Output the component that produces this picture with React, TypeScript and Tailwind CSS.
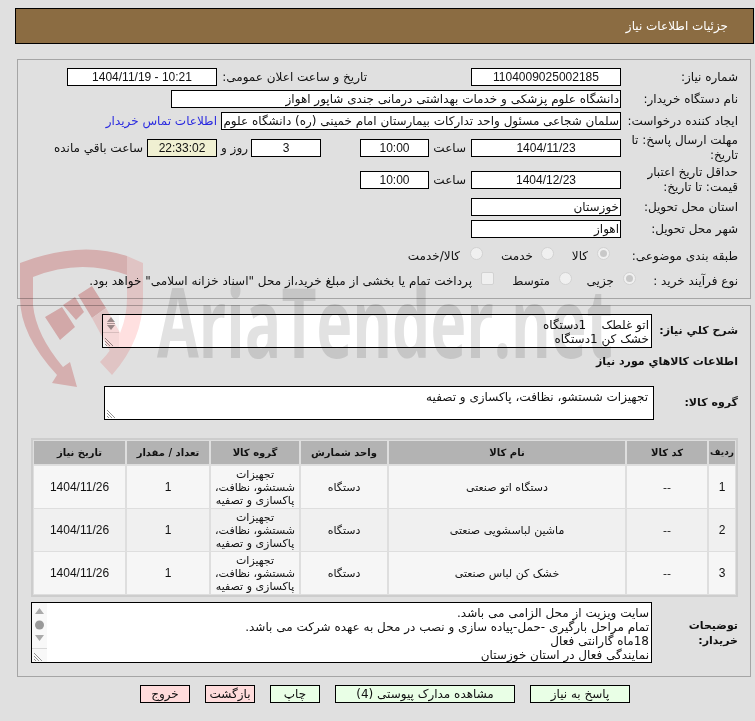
const FONT = "font-['DejaVu_Sans',sans-serif]";
const NUM = "font-['Liberation_Sans',sans-serif]";

function Box({ w, children, center, bg }: { w: string; children?: React.ReactNode; center?: boolean; bg?: string }) {
  return (
    <div className={`${w} h-[18px] shrink-0 overflow-hidden whitespace-nowrap border border-black px-px text-[12px] leading-[16px] ${bg ?? 'bg-white'} ${center ? `text-center ${NUM}` : 'text-right'}`}>
      {children}
    </div>
  );
}

function Row({ label, children, h, mt }: { label: React.ReactNode; children: React.ReactNode; h: string; mt: string }) {
  return (
    <div className={`flex items-center ${h} ${mt}`}>
      <div className="w-[128px] shrink-0 pr-[11px] text-[12px] leading-[15px]">{label}</div>
      {children}
    </div>
  );
}

function Radio({ on }: { on?: boolean }) {
  return (
    <span className="mb-[5px] flex h-[13px] w-[13px] shrink-0 items-center justify-center rounded-full border border-[#d2d2d2] bg-[#f0f0f0]">
      {on && <span className="h-[7px] w-[7px] rounded-full bg-[#c8c8c8]" />}
    </span>
  );
}

const cols = ['w-[26px]', 'w-[80px]', 'w-[236px]', 'w-[86px]', 'w-[88px]', 'w-[82px]', 'w-[91px]'];
const heads = ['ردیف', 'کد کالا', 'نام کالا', 'واحد شمارش', 'گروه کالا', 'تعداد / مقدار', 'تاریخ نیاز'];
const items = ['دستگاه اتو صنعتی', 'ماشین لباسشویی صنعتی', 'خشک کن لباس صنعتی'];

function Table() {
  return (
    <div className="mr-[11px] mt-[18px] flex w-[707px] flex-col gap-[1px] border-2 border-[#cdcdcd] bg-[#dedede] p-[1px]">
      <div className="mb-[1px] flex gap-[2px]">
        {heads.map((t, i) => (
          <div key={t} className={`${cols[i]} ${i === 0 ? 'text-[9px]' : 'text-[10px]'} flex h-[23px] items-center justify-center whitespace-nowrap bg-[#b3b3b3] font-bold`}>{t}</div>
        ))}
      </div>
      {items.map((name, r) => {
        const cells = [String(r + 1), '--', name, 'دستگاه', '', '1', '1404/11/26'];
        const bg = r === 1 ? 'bg-[#f0f0f0]' : 'bg-[#f6f6f6]';
        return (
          <div key={name} className="flex gap-[2px]">
            {cells.map((c, i) => (
              <div key={i} className={`${cols[i]} ${bg} ${i === 6 || i === 5 || i === 0 ? `${NUM} text-[12px]` : 'text-[11px]'} flex h-[42px] items-center justify-center overflow-hidden text-center leading-[13px]`}>
                {i === 4 ? (
                  <div className="whitespace-nowrap text-[11px] font-['DejaVu_Sans',sans-serif]">
                    <div>تجهیزات</div>
                    <div>شستشو، نظافت،</div>
                    <div>پاکسازی و تصفیه</div>
                  </div>
                ) : c}
              </div>
            ))}
          </div>
        );
      })}
    </div>
  );
}

function Corner() {
  return (
    <svg width="12" height="10" viewBox="0 0 12 10" className="absolute bottom-0 left-0">
      <path d="M2 1l8 8M2 4l5 5M2 7l2 2" stroke="#777" strokeWidth="0.8" />
    </svg>
  );
}

function Btn({ w, bg, children }: { w: string; bg: string; children: React.ReactNode }) {
  return <div className={`${w} ${bg} flex h-[18px] items-center justify-center border border-black text-[12px]`}>{children}</div>;
}

function Watermark() {
  return (
    <div className="pointer-events-none absolute inset-0 z-10 mix-blend-multiply" dir="ltr">
      <svg width="755" height="721" viewBox="0 0 755 721" className="absolute left-0 top-0">
        <path d="M20 263 Q80 240 127 256 L127 275 Q80 258 33 277 L33 305 Q36 335 63 367 L70 362 L77 387 L52 383 L57 375 Q20 335 20 298 Z" fill="#f3c8c8" />
        <path d="M127 256 L143 263 L143 298 Q143 340 112 375 L100 362 Q127 335 127 298 Z" fill="#ffe0e0" />
        <path d="M45 317 L62 307 L75 327 L60 340 Z M63 305 L75 297 L84 312 L76 320 Z M78 295 L92 286 L106 308 L92 318 Z" fill="#efc0c0" />
        <path d="M92 318 L106 308 L127 345 L112 355 Z" fill="#ffe0e0" />
      </svg>
      <div className="absolute left-[157px] top-[271px] origin-left scale-x-[0.631] whitespace-nowrap font-['Open_Sans',sans-serif] text-[96px] font-bold leading-[100px] text-[#e2e2e2]">
        AriaTender.net
      </div>
    </div>
  );
}

export default function App() {
  return (
    <div dir="rtl" className={`${FONT} relative h-[721px] w-[755px] overflow-hidden bg-[#e0e0e0] text-[#111]`}>
      <div className="absolute left-[15px] top-[8px] flex h-[36px] w-[739px] items-center border border-black bg-[#8b6c42] pr-[25px] text-[12px] text-white">
        جزئیات اطلاعات نیاز
      </div>

      <Watermark />

      <div className="absolute left-[17px] top-[59px] h-[240px] w-[734px] border border-[#a5a5a5] pr-px pt-[8px]">
        <Row label="شماره نیاز:" h="h-[18px]" mt="">
          <Box w="w-[150px]" center>1104009025002185</Box>
          <div className="w-[250px] shrink-0 whitespace-nowrap pr-[104px] text-[12px]">تاریخ و ساعت اعلان عمومی:</div>
          <Box w="w-[150px] mr-[4px]" center><span dir="ltr">1404/11/19 - 10:21</span></Box>
        </Row>
        <Row label="نام دستگاه خریدار:" h="h-[18px]" mt="mt-[4px]">
          <Box w="w-[450px]">دانشگاه علوم پزشکی و خدمات بهداشتی درمانی جندی شاپور اهواز</Box>
        </Row>
        <Row label={<span className="whitespace-nowrap">ایجاد کننده درخواست:</span>} h="h-[18px]" mt="mt-[4px]">
          <Box w="w-[400px]">سلمان شجاعی مسئول واحد تدارکات بیمارستان امام خمینی (ره) دانشگاه علوم پزشکی</Box>
          <span className="mr-[4px] whitespace-nowrap text-[12px] text-[#2a2ae0]">اطلاعات تماس خریدار</span>
        </Row>
        <Row label="مهلت ارسال پاسخ: تا تاریخ:" h="h-[30px]" mt="mt-[3px]">
          <Box w="w-[150px]" center>1404/11/23</Box>
          <span className="w-[42px] shrink-0 pr-[5px] text-[12px]">ساعت</span>
          <Box w="w-[69px]" center>10:00</Box>
          <span className="w-[39px] shrink-0" />
          <Box w="w-[70px]" center>3</Box>
          <span className="w-[34px] shrink-0 whitespace-nowrap pr-[3px] text-[12px]">روز و</span>
          <Box w="w-[70px]" center bg="bg-[#f0f0d2]">22:33:02</Box>
          <span className="mr-[4px] whitespace-nowrap text-[12px]">ساعت باقي مانده</span>
        </Row>
        <Row label="حداقل تاریخ اعتبار قیمت: تا تاریخ:" h="h-[30px]" mt="mt-[2px]">
          <Box w="w-[150px]" center>1404/12/23</Box>
          <span className="w-[42px] shrink-0 pr-[5px] text-[12px]">ساعت</span>
          <Box w="w-[69px]" center>10:00</Box>
        </Row>
        <Row label="استان محل تحویل:" h="h-[18px]" mt="mt-[3px]">
          <Box w="w-[150px]">خوزستان</Box>
        </Row>
        <Row label="شهر محل تحویل:" h="h-[18px]" mt="mt-[4px]">
          <Box w="w-[150px]">اهواز</Box>
        </Row>
        <Row label="طبقه بندی موضوعی:" h="h-[18px]" mt="mt-[9px]">
          <div className="flex items-center whitespace-nowrap text-[12px]">
            <span className="mr-[11px]"><Radio on /></span>
            <span className="w-[43px] shrink-0 pr-[9px]">کالا</span>
            <Radio />
            <span className="w-[58px] shrink-0 pr-[8px]">خدمت</span>
            <Radio />
            <span className="pr-[10px]">کالا/خدمت</span>
          </div>
        </Row>
        <Row label="نوع فرآیند خرید :" h="h-[18px]" mt="mt-[7px]">
          <div className="flex items-center whitespace-nowrap text-[12px]">
            <span className="mr-[-15px]"><Radio on /></span>
            <span className="w-[51px] shrink-0 pr-[9px]">جزیی</span>
            <Radio />
            <span className="w-[65px] shrink-0 pr-[9px]">متوسط</span>
            <span className="mb-[5px] h-[13px] w-[13px] shrink-0 rounded-[2px] border border-[#d2d2d2] bg-[#f0f0f0]" />
            <span className="pr-[9px]">پرداخت تمام یا بخشی از مبلغ خرید،از محل "اسناد خزانه اسلامی" خواهد بود.</span>
          </div>
        </Row>
      </div>

      <div className="absolute left-[17px] top-[305px] h-[372px] w-[734px] border border-[#a5a5a5] pr-px pt-[1px]">
        <div className="mt-[7px] flex h-[34px] items-center">
          <div className="w-[97px] shrink-0 whitespace-nowrap pr-[11px] text-[11px] font-bold">شرح كلي نیاز:</div>
          <div className="relative h-[34px] w-[550px] shrink-0 overflow-hidden border border-black bg-white pl-px pr-[2px] pt-[3px] text-[12px] leading-[14px]">
            <div>اتو غلطک &nbsp; &nbsp;1دستگاه</div>
            <div>خشک کن 1دستگاه</div>
            <div className="absolute bottom-0 left-0 top-0 w-[16px] bg-[#f6f6f6]">
              <svg width="16" height="17" viewBox="0 0 16 17" className="block"><path d="M8 2l4 5H4zM8 15l4-5H4z" fill="#999" /><path d="M4 8.500h8" stroke="#aaa" /></svg>
              <div className="border-t border-[#d8d8d8]" />
              <Corner />
            </div>
          </div>
        </div>
        <div className="mt-[6px] pr-[11px] text-[11px] font-bold leading-[15px]">اطلاعات كالاهاي مورد نیاز</div>
        <div className="mt-[17px] flex h-[34px] items-center">
          <div className="w-[95px] shrink-0 pr-[11px] text-[11px] font-bold">گروه کالا:</div>
          <div className="relative h-[34px] w-[550px] shrink-0 border border-black bg-white px-[5px] text-[12px] leading-[20px]">
            تجهیزات شستشو، نظافت، پاکسازی و تصفیه
            <Corner />
          </div>
        </div>
        <Table />
        <div className="mt-[5px] flex h-[61px] items-center">
          <div className="w-[97px] shrink-0 pr-[11px] text-[11px] font-bold leading-[15px]">توضیحات خریدار:</div>
          <div className="relative h-[61px] w-[621px] shrink-0 overflow-hidden border border-black bg-white pl-px pr-[2px] pt-[3px] text-[12px] leading-[14px]">
            <div>سایت ویزیت از محل الزامی می باشد.</div>
            <div>تمام مراحل بارگیری -حمل-پیاده سازی و نصب در محل به عهده شرکت می باشد.</div>
            <div>18ماه گارانتی فعال</div>
            <div>نمایندگی فعال در استان خوزستان</div>
            <div className="absolute bottom-0 left-0 top-0 flex w-[15px] flex-col items-center bg-[#f8f8f8]">
              <svg width="15" height="45" viewBox="0 0 15 45" className="block"><path d="M7.500 5l4.500 6H3zM7.500 38l4.500-6H3z" fill="#aaa" /><circle cx="7.500" cy="22" r="4.500" fill="#999" /></svg>
              <div className="w-full border-t border-[#d8d8d8]" />
              <Corner />
            </div>
          </div>
        </div>
      </div>

      <div className="absolute left-[140px] top-[685px] flex flex-row-reverse gap-[15px]">
        <Btn w="w-[50px]" bg="bg-[#ffdcdc]">خروج</Btn>
        <Btn w="w-[50px]" bg="bg-[#ffdcdc]">بازگشت</Btn>
        <Btn w="w-[50px]" bg="bg-[#e9ffe6]">چاپ</Btn>
        <Btn w="w-[180px]" bg="bg-[#e9ffe6]">مشاهده مدارک پیوستی (4)</Btn>
        <Btn w="w-[100px]" bg="bg-[#e9ffe6]">پاسخ به نیاز</Btn>
      </div>
    </div>
  );
}
